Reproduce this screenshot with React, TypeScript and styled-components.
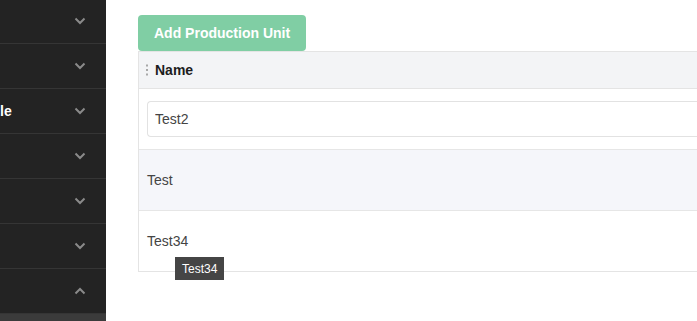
import React from 'react';
import styled, { createGlobalStyle } from 'styled-components';

const GlobalStyle = createGlobalStyle`
	html, body {
		margin: 0;
		padding: 0;
		background: #ffffff;
		font-family: 'Liberation Sans', Arial, sans-serif;
		overflow: hidden;
	}
`;

const Page = styled.div`
	display: flex;
	width: 697px;
	height: 321px;
	overflow: hidden;
`;

const Sidebar = styled.nav`
	width: 106px;
	flex-shrink: 0;
	background: #232323;
	display: flex;
	flex-direction: column;
	margin-top: -1px;
`;

const NavItem = styled.div`
	height: 44px;
	flex-shrink: 0;
	display: flex;
	align-items: center;
	justify-content: space-between;
	padding-right: 20px;
	border-bottom: 1px solid #353535;
	color: #ffffff;
	font-weight: 700;
	font-size: 14px;
`;

const NavLabel = styled.span`
	white-space: nowrap;
`;

const ActiveStrip = styled.div`
	margin-top: auto;
	height: 8px;
	background: #3b3b3b;
`;

const Main = styled.main`
	flex: 1;
	padding: 15px 0 0 32px;
	display: flex;
	flex-direction: column;
	align-items: flex-start;
`;

const AddButton = styled.button`
	height: 36px;
	padding: 0 16px;
	border: none;
	border-radius: 4px;
	background: #80cea4;
	color: #ffffff;
	font-family: inherit;
	font-weight: 700;
	font-size: 14px;
	cursor: pointer;
`;

const Table = styled.div`
	width: 100%;
	border-left: 1px solid #e4e4e4;
	border-top: 1px solid #e4e4e4;
	border-bottom: 1px solid #e4e4e4;
`;

const HeaderRow = styled.div`
	height: 36px;
	display: flex;
	align-items: center;
	padding-left: 6px;
	gap: 6px;
	background: #f3f4f6;
	border-bottom: 1px solid #e4e4e4;
	color: #1d1d1d;
	font-weight: 700;
	font-size: 14px;
`;

const Row = styled.div<{ $alt?: boolean }>`
	position: relative;
	height: 60px;
	display: flex;
	align-items: center;
	padding-left: 8px;
	background: ${(p) => (p.$alt ? '#f5f6fa' : '#ffffff')};
	border-bottom: 1px solid #e6e6e6;
	color: #444;
	font-size: 14px;
	&:last-child {
		border-bottom: none;
	}
`;

const NameInput = styled.input`
	width: 100%;
	height: 36px;
	box-sizing: border-box;
	padding: 0 7px;
	border: 1px solid #e2e2e2;
	border-right: none;
	border-radius: 4px 0 0 4px;
	font-family: inherit;
	font-size: 14px;
	color: #444;
	outline: none;
`;

const Tooltip = styled.div`
	position: absolute;
	left: 36px;
	top: 46px;
	height: 23px;
	padding: 0 7px;
	display: flex;
	align-items: center;
	background: #454545;
	color: #ffffff;
	font-size: 12px;
	white-space: nowrap;
	z-index: 2;
`;

const Chevron: React.FC<{ up?: boolean }> = ({ up }) => (
	<svg width="12" height="8" viewBox="0 0 12 8">
		<path
			d={up ? 'M1.5 6.5 L6 2 L10.5 6.5' : 'M1.5 1.5 L6 6 L10.5 1.5'}
			fill="none"
			stroke="#8a8a8a"
			strokeWidth="2"
		/>
	</svg>
);

const DragHandle = () => (
	<svg width="4" height="12" viewBox="0 0 4 12">
		<rect x="1" y="0.5" width="2" height="2" fill="#a8a8a8" />
		<rect x="1" y="5" width="2" height="2" fill="#a8a8a8" />
		<rect x="1" y="9.5" width="2" height="2" fill="#a8a8a8" />
	</svg>
);

const navItems = ['', '', 'le', '', '', '', ''];

export default function App() {
	return (
		<>
			<GlobalStyle />
			<Page>
				<Sidebar>
					{navItems.map((label, i) => (
						<NavItem key={i}>
							<NavLabel>{label}</NavLabel>
							<Chevron up={i === navItems.length - 1} />
						</NavItem>
					))}
					<ActiveStrip />
				</Sidebar>
				<Main>
					<AddButton>Add Production Unit</AddButton>
					<Table>
						<HeaderRow>
							<DragHandle />
							Name
						</HeaderRow>
						<Row>
							<NameInput defaultValue="Test2" />
						</Row>
						<Row $alt>Test</Row>
						<Row>
							Test34
							<Tooltip>Test34</Tooltip>
						</Row>
					</Table>
				</Main>
			</Page>
		</>
	);
}
